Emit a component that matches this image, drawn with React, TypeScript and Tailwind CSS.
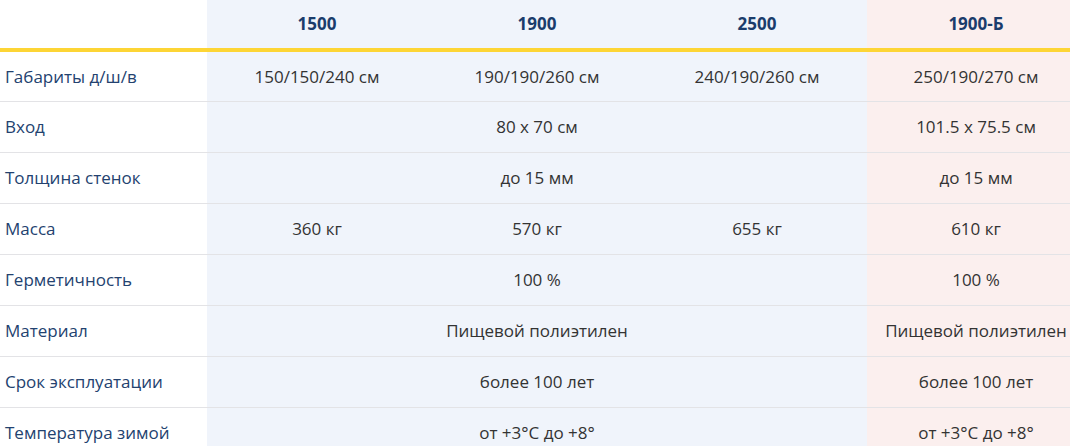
import React from "react";

type Row = { label: string; cells: string[]; span?: boolean; b: string };

const rows: Row[] = [
  { label: "Габариты д/ш/в", cells: ["150/150/240 см", "190/190/260 см", "240/190/260 см"], b: "250/190/270 см" },
  { label: "Вход", cells: ["80 x 70 см"], span: true, b: "101.5 x 75.5 см" },
  { label: "Толщина стенок", cells: ["до 15 мм"], span: true, b: "до 15 мм" },
  { label: "Масса", cells: ["360 кг", "570 кг", "655 кг"], b: "610 кг" },
  { label: "Герметичность", cells: ["100 %"], span: true, b: "100 %" },
  { label: "Материал", cells: ["Пищевой полиэтилен"], span: true, b: "Пищевой полиэтилен" },
  { label: "Срок эксплуатации", cells: ["более 100 лет"], span: true, b: "более 100 лет" },
  { label: "Температура зимой", cells: ["от +3°С до +8°"], span: true, b: "от +3°С до +8°" },
];

export default function App() {
  return (
    <div className="w-[1070px] h-[446px] overflow-hidden bg-white font-['Open_Sans',sans-serif] text-[17px]">
      {/* table is a little wider than the viewport, last column gets clipped */}
      <table className="w-[1085px] border-collapse table-fixed">
        <colgroup>
          <col className="w-[207px]" />
          <col className="w-[220px]" />
          <col className="w-[220px]" />
          <col className="w-[220px]" />
          <col className="w-[218px]" />
        </colgroup>
        <thead>
          <tr className="h-[50px] border-b-[4px] border-[#fdd535]">
            <th />
            {["1500", "1900", "2500"].map((h) => (
              <th key={h} className="bg-[#f0f4fb] font-bold text-[#1b3c6c] text-center">
                {h}
              </th>
            ))}
            <th className="bg-[#fbefee] font-bold text-[#1b3c6c] text-center">1900-Б</th>
          </tr>
        </thead>
        <tbody>
          {rows.map((r) => (
            <tr key={r.label} className="h-[51px] border-b border-[#e3e3e6]">
              <td className="pl-[5px] text-[#23426f]">{r.label}</td>
              {r.span ? (
                <td colSpan={3} className="bg-[#f0f4fb] text-center text-[#333]">
                  {r.cells[0]}
                </td>
              ) : (
                r.cells.map((c, i) => (
                  <td key={i} className="bg-[#f0f4fb] text-center text-[#333]">
                    {c}
                  </td>
                ))
              )}
              <td className="bg-[#fbefee] text-center text-[#333]">{r.b}</td>
            </tr>
          ))}
        </tbody>
      </table>
    </div>
  );
}
